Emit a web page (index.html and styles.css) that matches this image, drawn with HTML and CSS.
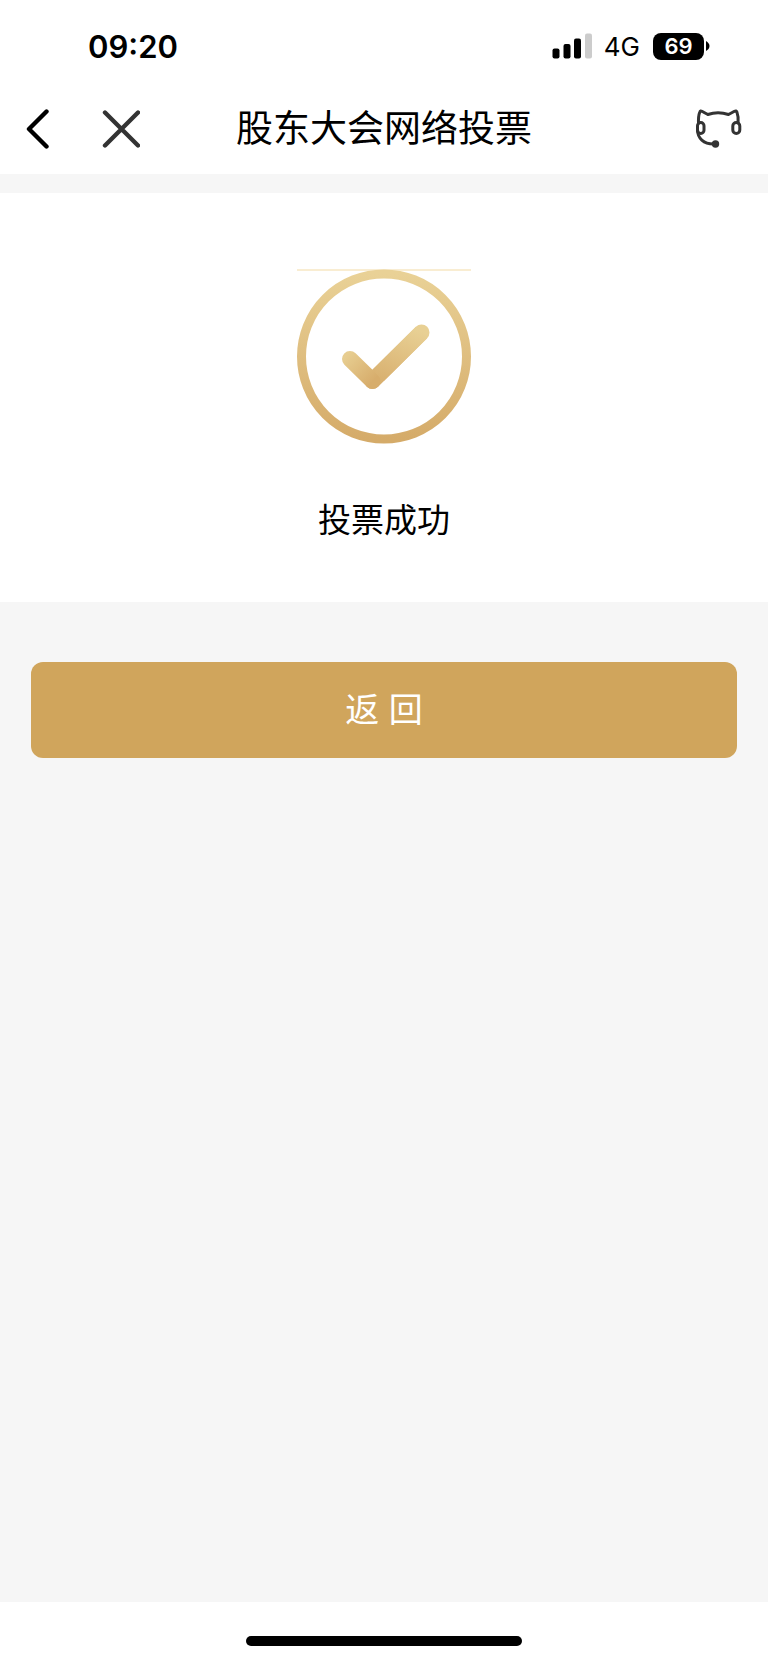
FILE: index.html
```html
<!DOCTYPE html>
<html lang="zh-CN">

<head>
    <meta charset="UTF-8">
    <meta name="viewport" content="width=device-width, initial-scale=1.0">
    <title>股东大会网络投票</title>
    <link rel="stylesheet" href="styles.css">
</head>

<body>

    <!-- Status bar -->
    <div class="status-bar">
        <span class="time">09:20</span>
        <div class="status-icons">
            <svg class="signal" width="40" height="26" viewBox="0 0 40 26">
                <rect x="0.500" y="15.500" width="7" height="10" rx="2" />
                <rect x="11.500" y="11" width="7" height="14.500" rx="2" />
                <rect x="22" y="5.500" width="7" height="20" rx="2" />
                <rect x="33" y="0.500" width="7" height="25" rx="2" fill="#cccccc" />
            </svg>
            <span class="network">4G</span>
            <span class="battery">69</span>
            <svg class="battery-tip" width="4" height="10" viewBox="0 0 4 10">
                <path d="M0 0C2 1 3.500 3 3.500 5S2 9 0 10Z" />
            </svg>
        </div>
    </div>

    <!-- Navigation -->
    <header class="nav-bar">
        <div class="nav-left">
            <button type="button" class="icon-button" aria-label="后退">
                <svg width="24" height="40" viewBox="0 0 24 40" fill="none" stroke="#000000" stroke-width="4.400" stroke-linecap="round" stroke-linejoin="round">
                    <path d="M20.500 2.500L3 20L20.500 37.500" />
                </svg>
            </button>
            <button type="button" class="icon-button" aria-label="关闭">
                <svg width="38" height="40" viewBox="0 0 38 40" fill="none" stroke="#333333" stroke-width="4.400" stroke-linecap="round">
                    <path d="M3 3.500L36 36.500M36 3.500L3 36.500" />
                </svg>
            </button>
        </div>
        <h1>股东大会网络投票</h1>
        <button type="button" class="icon-button" aria-label="客服">
            <svg width="46" height="40" viewBox="0 0 46 40" fill="none" stroke="#333333" stroke-width="3" stroke-linecap="round" stroke-linejoin="round">
                <path d="M2.500 14C2.300 9 2.800 5.500 3.800 3C4.200 1.900 4.900 1.800 5.900 2.300L11.800 5.500Q22 2 32.500 5.500L38.500 2.300C39.700 1.700 40.500 2 40.900 3C42.200 6.500 42.500 10 42.100 14" />
                <rect x="1.500" y="13.500" width="6.500" height="11" rx="3.200" />
                <rect x="36.800" y="13.500" width="7" height="11" rx="3.500" />
                <path d="M1.500 20C1.200 29.500 8 35 17.500 35" />
                <circle cx="19.500" cy="35" r="3.700" fill="#333333" stroke="none" />
            </svg>
        </button>
    </header>

    <main>
        <section class="result">
            <svg class="result-icon" width="174" height="175" viewBox="0 0 174 175" fill="none" stroke-linecap="round" stroke-linejoin="round">
                <defs>
                    <linearGradient id="ring" x1="0" y1="0" x2="0" y2="1">
                        <stop offset="0" stop-color="#e9d196" />
                        <stop offset="1" stop-color="#d5ab69" />
                    </linearGradient>
                    <linearGradient id="shortArm" gradientUnits="userSpaceOnUse" x1="50" y1="86" x2="76" y2="112">
                        <stop offset="0" stop-color="#e7cd90" />
                        <stop offset="1" stop-color="#d7ad6c" />
                    </linearGradient>
                    <linearGradient id="longArm" gradientUnits="userSpaceOnUse" x1="108" y1="56" x2="84" y2="118">
                        <stop offset="0" stop-color="#e8d094" />
                        <stop offset="1" stop-color="#d7ad6c" />
                    </linearGradient>
                </defs>
                <path d="M0 1H174" stroke="#f9edd2" stroke-width="2" stroke-linecap="butt" />
                <circle cx="87" cy="87.500" r="82.500" stroke="url(#ring)" stroke-width="9" />
                <path d="M75.500 112L124.500 63.500" stroke="url(#longArm)" stroke-width="16" />
                <path d="M53 90L75.500 112" stroke="url(#shortArm)" stroke-width="16" />
                <path d="M81 106.500L124.500 63.500" stroke="url(#longArm)" stroke-width="16" stroke-linecap="butt" />
            </svg>
            <p>投票成功</p>
        </section>
        <div class="actions">
            <button type="button" class="back-button">返 回</button>
        </div>
    </main>

    <footer class="home-area">
        <div class="home-indicator"></div>
    </footer>

</body>

</html>
```
FILE: styles.css
```css
* {
    box-sizing: border-box;
}

body {
    font-family: "Liberation Sans", "Noto Sans CJK SC", sans-serif;
    background-color: #ffffff;
    color: #000000;
    display: flex;
    flex-direction: column;
    min-height: 100vh;
    margin: 0;
}

svg {
    display: block;
}

/* Status bar */
.status-bar {
    display: flex;
    justify-content: space-between;
    align-items: center;
    height: 84px;
    padding: 8px 58px 0 88px;
    font-family: Inter, sans-serif;
}

.time {
    font-size: 31px;
    font-weight: 600;
}

.status-icons {
    display: flex;
    align-items: center;
}

.network {
    margin: 0 13px 0 12px;
    font-size: 26px;
}

.battery {
    width: 51px;
    border-radius: 8px;
    background-color: #000000;
    color: #ffffff;
    font-size: 22px;
    font-weight: 600;
    line-height: 27px;
    text-align: center;
}

.battery-tip {
    margin-left: 2px;
}

/* Navigation */
.nav-bar {
    display: grid;
    grid-template-columns: 1fr auto 1fr;
    align-items: center;
    height: 90px;
    padding: 0 26px;
}

.nav-left {
    display: flex;
    gap: 52px;
}

.nav-bar > .icon-button {
    justify-self: end;
}

.icon-button {
    padding: 0;
    border: none;
    background: none;
    cursor: pointer;
}

h1 {
    margin: 0;
    padding-top: 2px;
    font-size: 37px;
    font-weight: 400;
    line-height: 54px;
}

/* Content */
main {
    flex: 1;
    padding-top: 19px;
    background-color: #f6f6f6;
}

.result {
    display: flex;
    flex-direction: column;
    align-items: center;
    padding: 76px 0 57px;
    background-color: #ffffff;
}

.result p {
    margin: 53px 0 0;
    font-size: 33px;
    line-height: 48px;
}

.actions {
    padding: 60px 31px;
}

.back-button {
    display: block;
    width: 100%;
    height: 96px;
    padding: 0 0 6px;
    border: none;
    border-radius: 12px;
    background-color: #d0a55c;
    color: #ffffff;
    font-family: inherit;
    font-size: 34px;
    cursor: pointer;
}

/* Home indicator */
.home-area {
    height: 61px;
    padding-top: 34px;
}

.home-indicator {
    width: 36%;
    height: 10px;
    margin: 0 auto;
    border-radius: 5px;
    background-color: #000000;
}
```
